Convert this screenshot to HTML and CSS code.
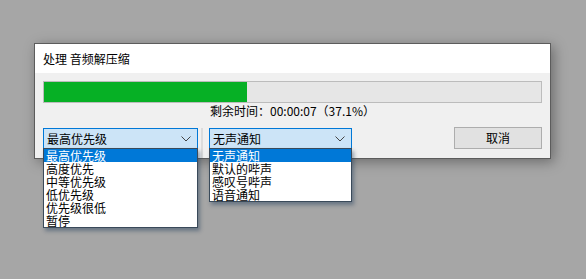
FILE: index.html
```html
<!DOCTYPE html>
<html>
<head>
<meta charset="utf-8">
<link rel="stylesheet" href="styles.css">
</head>
<body>
<div class="window">
  <div class="titlebar">处理 音频解压缩</div>
  <div class="content">
    <div class="progress"><div class="fill" style="width:203px"></div></div>
    <div class="status">剩余时间：00:00:07（37.1%）</div>
    <div class="row">
      <div class="combo c1">
        <span class="label">最高优先级</span>
        <svg class="chev" width="10" height="6" viewBox="0 0 10 6"><path d="M0.5 0.5 L5 5 L9.5 0.5" fill="none" stroke="#444" stroke-width="1"/></svg>
        <ul class="list">
          <li class="sel">最高优先级</li>
          <li>高度优先</li>
          <li>中等优先级</li>
          <li>低优先级</li>
          <li>优先级很低</li>
          <li>暂停</li>
        </ul>
      </div>
      <div class="sep"></div>
      <div class="combo c2">
        <span class="label">无声通知</span>
        <svg class="chev" width="10" height="6" viewBox="0 0 10 6"><path d="M0.5 0.5 L5 5 L9.5 0.5" fill="none" stroke="#444" stroke-width="1"/></svg>
        <ul class="list">
          <li class="sel">无声通知</li>
          <li>默认的哔声</li>
          <li>感叹号哔声</li>
          <li>语音通知</li>
        </ul>
      </div>
      <div class="spacer"></div>
      <div class="button">取消</div>
    </div>
  </div>
</div>
</body>
</html>
```
FILE: styles.css
```css
html, body {
  margin: 0;
  padding: 0;
}
body {
  background: #a6a6a6;
  width: 586px;
  height: 279px;
  overflow: hidden;
  font-family: "Noto Sans CJK SC", "Noto Sans", sans-serif;
  font-size: 12px;
  color: #000;
  padding: 43px 0 0 34px;
  box-sizing: border-box;
}
.window {
  width: 517px;
  height: 116px;
  box-sizing: border-box;
  border: 1px solid #5c5c5c;
  background: #f0f0f0;
  box-shadow: 3px 3px 12px rgba(0,0,0,0.35);
}
.titlebar {
  height: 29px;
  background: #fff;
  padding-left: 8px;
  line-height: 29px;
  font-size: 12px;
}
.content {
  padding: 8px 0 0 8px;
}
.progress {
  width: 499px;
  height: 22px;
  box-sizing: border-box;
  border: 1px solid #bcbcbc;
  background: #e6e6e6;
}
.fill {
  height: 20px;
  background: #06b025;
}
.status {
  width: 499px;
  text-align: center;
  height: 14px;
  line-height: 14px;
  margin-top: 1px;
  font-size: 12px;
}
.row {
  display: flex;
  align-items: flex-start;
  margin-top: 10px;
  width: 499px;
}
.combo {
  position: relative;
  height: 21px;
  box-sizing: border-box;
  border: 1px solid #0078d7;
  background: #cce4f7;
  display: flex;
  align-items: center;
  padding-left: 3px;
}
.c1 { width: 155px; }
.c2 { width: 143px; margin-left: 2px; }
.label {
  flex: 1;
  font-size: 12px;
  line-height: 19px;
}
.chev {
  margin-right: 6px;
}
.sep {
  width: 2px;
  height: 30px;
  background: #dcdcdc;
  margin: 0 4px 0 3px;
}
.spacer { flex: 1; }
.button {
  width: 88px;
  height: 22px;
  box-sizing: border-box;
  border: 1px solid #adadad;
  background: #e1e1e1;
  text-align: center;
  line-height: 20px;
  font-size: 12px;
  margin-top: -1px;
}
.list {
  position: absolute;
  left: -1px;
  top: 19px;
  box-sizing: border-box;
  margin: 0;
  padding: 0;
  list-style: none;
  background: #fff;
  border: 1px solid #3a4a5a;
  box-shadow: 2px 3px 4px rgba(30,60,90,0.45);
}
.c1 .list { width: 155px; }
.c2 .list { width: 143px; }
.list li {
  height: 13px;
  line-height: 13px;
  font-size: 12px;
  padding-left: 2px;
  white-space: nowrap;
}
.list li.sel {
  background: #0078d7;
  color: #fff;
}
```
